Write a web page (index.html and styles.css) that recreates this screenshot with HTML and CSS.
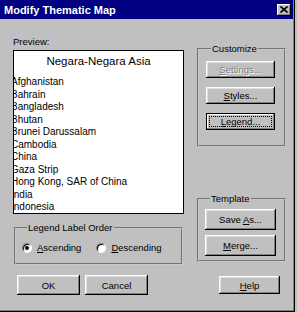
FILE: index.html
```html
<html lang="en"><head>
    <meta charset="UTF-8">
    <title>Modify Thematic Map</title>
    <link rel="stylesheet" href="styles.css">
</head>
<body>
    <div class="window">
        <div class="titlebar">
            <span class="title">Modify Thematic Map</span>
            <span class="close">
                <svg width="8" height="7" viewBox="0 0 8 7"><path d="M0.5 0.5 L7.5 6.5 M7.5 0.5 L0.5 6.5" stroke="#000" stroke-width="1.6" fill="none"/></svg>
            </span>
        </div>

        <div class="content">
            <div class="left">
                <div class="label">Preview:</div>
                <div class="preview">
                    <div class="preview-title">Negara-Negara Asia</div>
                    <ul class="items">
                        <li>Afghanistan</li>
                        <li>Bahrain</li>
                        <li>Bangladesh</li>
                        <li>Bhutan</li>
                        <li>Brunei Darussalam</li>
                        <li>Cambodia</li>
                        <li>China</li>
                        <li>Gaza Strip</li>
                        <li>Hong Kong, SAR of China</li>
                        <li>India</li>
                        <li>Indonesia</li>
                    </ul>
                </div>
                <fieldset class="group order">
                    <legend>Legend Label Order</legend>
                    <div class="radios">
                        <label class="radio"><span class="dot checked"></span><span><u>A</u>scending</span></label>
                        <label class="radio"><span class="dot"></span><span><u>D</u>escending</span></label>
                    </div>
                </fieldset>
            </div>

            <div class="right">
                <fieldset class="group customize">
                    <legend>Customize</legend>
                    <button class="btn disabled" type="button"><u>S</u>ettings...</button>
                    <button class="btn" type="button"><u>S</u>tyles...</button>
                    <button class="btn default" type="button"><u>L</u>egend...</button>
                </fieldset>
                <fieldset class="group template">
                    <legend>Template</legend>
                    <button class="btn" type="button">Save <u>A</u>s...</button>
                    <button class="btn" type="button"><u>M</u>erge...</button>
                </fieldset>
            </div>
        </div>

        <div class="footer">
            <button class="btn ok" type="button">OK</button>
            <button class="btn cancel" type="button">Cancel</button>
            <button class="btn help" type="button"><u>H</u>elp</button>
        </div>
    </div>
</body></html>
```

FILE: styles.css
```css
body {
    margin: 0;
    background-color: #c0c0c0;
    font-family: "Liberation Sans", Arial, sans-serif;
    font-size: 9.5px;
    color: #000;
}
.window {
    width: 295px;
    height: 312px;
    box-sizing: border-box;
    background-color: #c0c0c0;
    border-right: 1px solid #000;
    border-bottom: 1px solid #000;
    box-shadow: inset -1px -1px 0 #808080;
}
.titlebar {
    height: 19px;
    margin-right: 1px;
    padding: 0 2px 0 4px;
    background-color: #000080;
    color: #fff;
    display: flex;
    align-items: center;
    justify-content: space-between;
}
.title {
    font-size: 11px;
    font-weight: bold;
}
.close {
    width: 14px;
    height: 12px;
    background-color: #c0c0c0;
    box-shadow: inset -1px -1px 0 #000, inset 1px 1px 0 #fff, inset -2px -2px 0 #808080;
    display: flex;
    align-items: center;
    justify-content: center;
}
.content {
    display: flex;
    padding: 17px 0 0 13px;
}
.left {
    width: 171px;
}
.label {
    line-height: 11px;
}
.preview {
    margin-top: 3px;
    height: 164px;
    box-sizing: border-box;
    background-color: #fff;
    border: 1px solid #000;
    overflow: hidden;
}
.preview-title {
    text-align: center;
    font-size: 11.5px;
    line-height: 14px;
    margin-top: 3px;
}
.items {
    list-style: none;
    margin: 8px 0 0 -3px;
    padding: 0;
    font-size: 10px;
    line-height: 12.5px;
    white-space: nowrap;
}
.group {
    margin: 0;
    padding: 0;
    border: 2px groove #c8c8c8;
    min-width: 0;
}
.group legend {
    margin-left: 5px;
    padding: 0 1px;
    line-height: 11px;
}
.order {
    margin: 8px 1px 0;
    padding: 9px 0 10px 6px;
}
.radios {
    display: flex;
    gap: 15px;
}
.radio {
    display: flex;
    align-items: center;
    gap: 5px;
    line-height: 11px;
}
.dot {
    width: 10px;
    height: 10px;
    box-sizing: border-box;
    border-radius: 50%;
    background-color: #fff;
    border: 1px solid;
    border-color: #808080 #fff #fff #808080;
    box-shadow: inset 1px 1px 0 #000;
    display: flex;
    align-items: center;
    justify-content: center;
}
.dot.checked::after {
    content: "";
    width: 4px;
    height: 4px;
    border-radius: 50%;
    background-color: #000;
}
.right {
    margin-left: 13px;
    width: 89px;
}
.customize {
    margin-top: 7px;
    padding: 7px 0 15px 7px;
    display: flex;
    flex-direction: column;
    gap: 9px;
}
.customize .btn {
    width: 69px;
    height: 17px;
}
.template {
    margin-top: 46px;
    padding: 5px 0 4px 6px;
    display: flex;
    flex-direction: column;
    gap: 5px;
}
.template .btn {
    width: 71px;
    height: 21px;
}
.btn {
    position: relative;
    font: inherit;
    color: #000;
    background-color: #c0c0c0;
    border: none;
    padding: 0;
    box-shadow: inset -1px -1px 0 #000, inset 1px 1px 0 #fff, inset -2px -2px 0 #808080, inset 2px 2px 0 #dfdfdf;
}
.btn.disabled {
    color: #808080;
    text-shadow: 1px 1px 0 #fff;
}
.btn.default {
    box-shadow: inset 0 0 0 1px #000, inset -2px -2px 0 #808080, inset 2px 2px 0 #fff;
}
.btn.default::after {
    content: "";
    position: absolute;
    inset: 3px;
    border: 1px dotted #000;
}
.footer {
    display: flex;
    align-items: flex-start;
    margin-top: 10px;
    padding: 0 14px 0 17px;
}
.ok, .cancel {
    width: 63px;
    height: 20px;
}
.cancel {
    margin-left: 5px;
}
.help {
    margin-left: auto;
    margin-top: 1px;
    width: 61px;
    height: 18px;
}
```
